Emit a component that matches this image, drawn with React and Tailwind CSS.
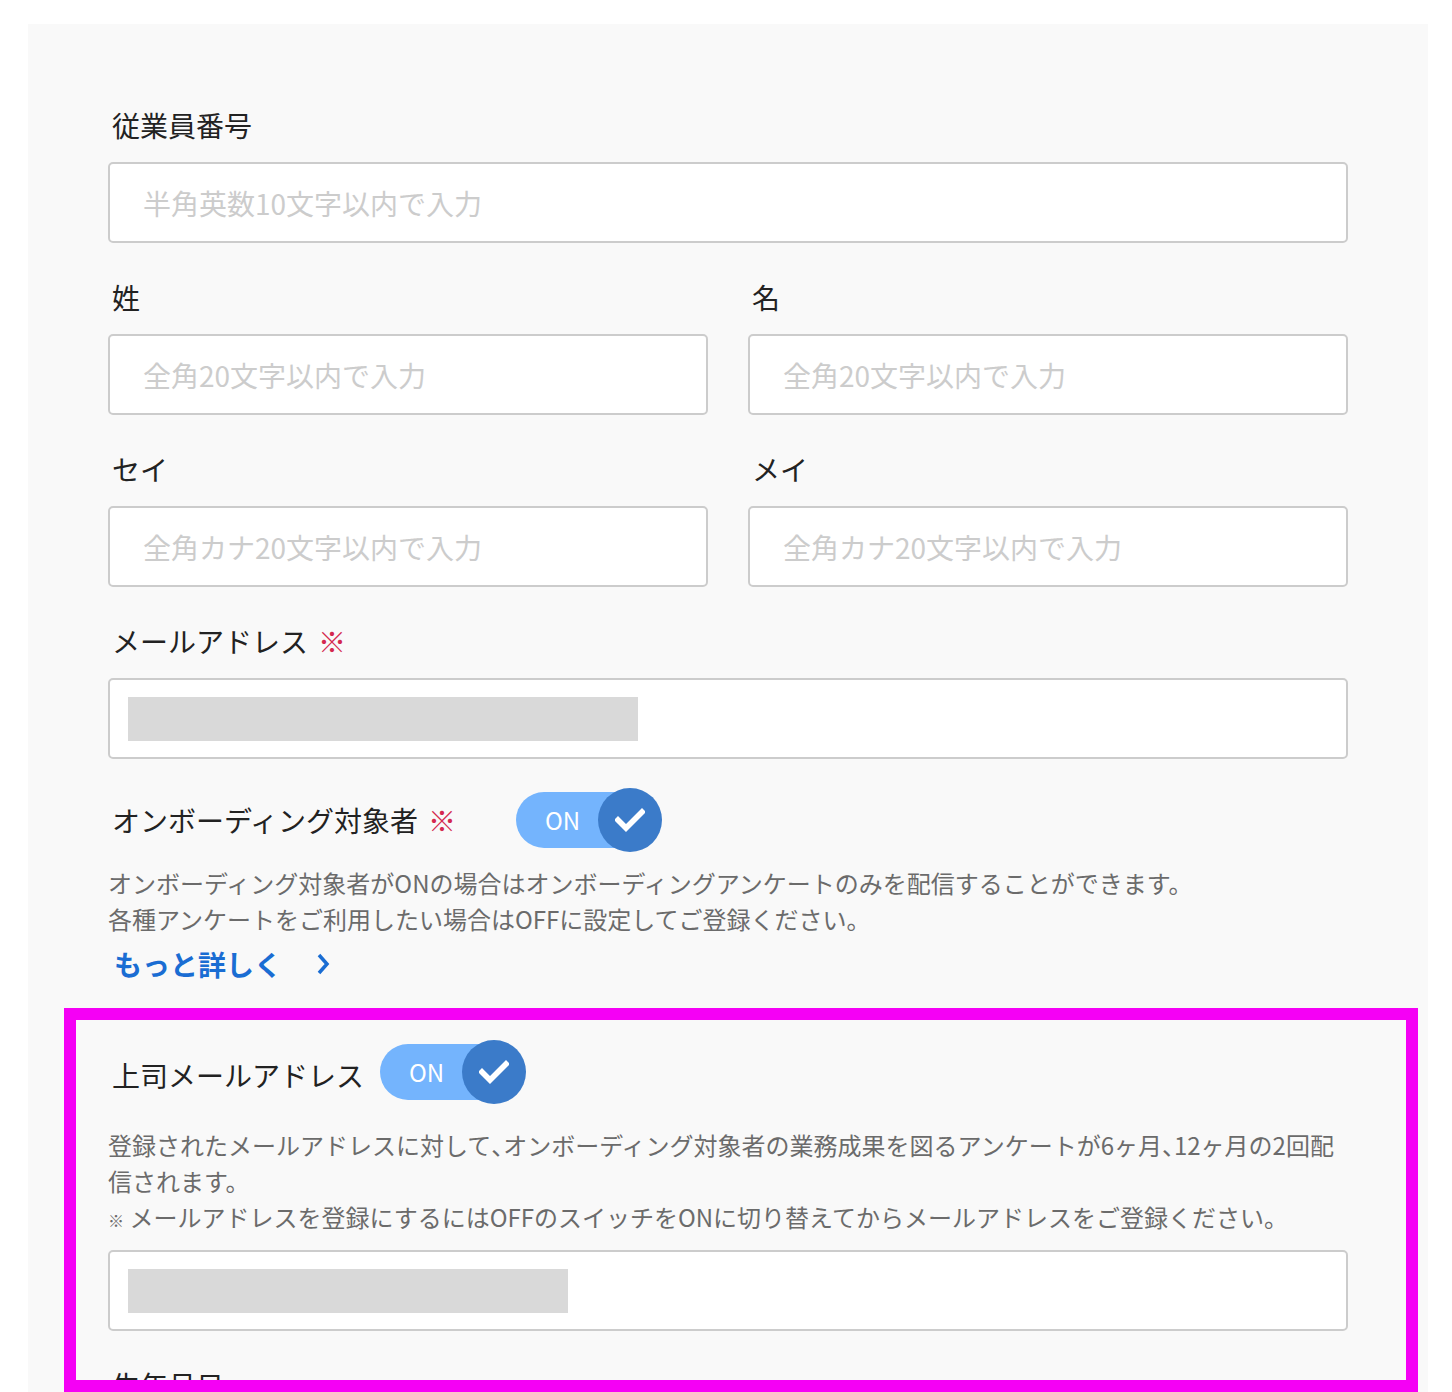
import React from "react";

const font = { fontFamily: '"Noto Sans CJK JP", "Noto Sans", sans-serif' };

function Label({ children, required }) {
  return (
    <div className="text-[28px] leading-[40px] text-[#222] mb-[17px] pl-[4px] whitespace-nowrap">
      {children}
      {required && <span className="text-[#d4294f] ml-[10px]">※</span>}
    </div>
  );
}

function Input({ placeholder, bar }) {
  return (
    <div className="h-[81px] bg-white border-2 border-[#cccccc] rounded-[5px] flex items-center pl-[18px]">
      {placeholder ? (
        <span className="text-[28px] text-[#cccccc] pl-[15px] whitespace-nowrap">{placeholder}</span>
      ) : (
        <div className="h-[44px] bg-[#d9d9d9]" style={{ width: bar }} />
      )}
    </div>
  );
}

function Toggle({ className = "" }) {
  return (
    <div className={"relative w-[146px] h-[64px] shrink-0 " + className}>
      <div className="absolute left-0 top-[4px] w-[130px] h-[56px] rounded-full bg-[#74b4fd] flex items-center pl-[29px]">
        <span className="text-[24px] text-white leading-none">ON</span>
      </div>
      <div className="absolute right-0 top-0 w-[64px] h-[64px] rounded-full bg-[#3b7bc9] flex items-center justify-center">
        <svg width="30" height="24" viewBox="0 0 30 24">
          <polyline points="3,12 11,20 27,4" fill="none" stroke="white" strokeWidth="5.5" strokeLinecap="square" />
        </svg>
      </div>
    </div>
  );
}

const Comma = () => <span className="[font-feature-settings:'halt']">、</span>;

export default function App() {
  return (
    <div className="h-[1392px] overflow-hidden bg-white pt-[24px] pl-[28px]" style={font}>
      <div className="w-[1400px] min-h-[1500px] bg-[#f9f9f9] px-[80px] pt-[81px]">
        <div className="mb-[34px]">
          <Label>従業員番号</Label>
          <Input placeholder="半角英数10文字以内で入力" />
        </div>
        <div className="grid grid-cols-2 gap-x-[40px]">
          <div className="mb-[34px]">
            <Label>姓</Label>
            <Input placeholder="全角20文字以内で入力" />
          </div>
          <div className="mb-[34px]">
            <Label>名</Label>
            <Input placeholder="全角20文字以内で入力" />
          </div>
          <div className="mb-[34px]">
            <Label>セイ</Label>
            <Input placeholder="全角カナ20文字以内で入力" />
          </div>
          <div className="mb-[34px]">
            <Label>メイ</Label>
            <Input placeholder="全角カナ20文字以内で入力" />
          </div>
        </div>
        <div>
          <Label required>メールアドレス</Label>
          <Input bar={510} />
        </div>

        <div className="flex items-center mt-[29px] h-[64px]">
          <div className="text-[28px] leading-[40px] text-[#222] pl-[4px] whitespace-nowrap">
            オンボーディング対象者<span className="text-[#d4294f] ml-[10px]">※</span>
          </div>
          <Toggle className="ml-[60px]" />
        </div>
        <div className="mt-[13px] text-[24px] leading-[36px] text-[#6b6b6b] whitespace-nowrap">
          <div>オンボーディング対象者がONの場合はオンボーディングアンケートのみを配信することができます。</div>
          <div>各種アンケートをご利用したい場合はOFFに設定してご登録ください。</div>
        </div>
        <div className="mt-[7px] flex items-center h-[40px] pl-[6px] text-[28px] font-bold text-[#1a6dd3]">
          <span className="leading-[40px]">もっと詳しく</span>
          <svg className="ml-[34px]" width="14" height="24" viewBox="0 0 14 24">
            <polyline points="3,3 11,12 3,21" fill="none" stroke="#1a6dd3" strokeWidth="3.5" />
          </svg>
        </div>

        <div className="relative mt-[56px]">
          <div className="absolute z-10 top-[-32px] left-[-44px] right-[-70px] h-[384px] border-[12px] border-[#f500f5] pointer-events-none" />
          <div className="flex items-center h-[64px]">
            <div className="text-[28px] leading-[40px] text-[#222] pl-[4px] pt-[6px] whitespace-nowrap">上司メールアドレス</div>
            <Toggle className="ml-[16px]" />
          </div>
          <div className="mt-[23px] text-[24px] leading-[36px] text-[#6b6b6b]">
            <div className="whitespace-nowrap h-[36px]">
              登録されたメールアドレスに対して<Comma />オンボーディング対象者の業務成果を図るアンケートが6ヶ月<Comma />12ヶ月の2回配
            </div>
            <div className="h-[36px]">信されます。</div>
            <div className="whitespace-nowrap h-[36px] overflow-visible">
              <span className="text-[16px] leading-none">※</span> メールアドレスを登録にするにはOFFのスイッチをONに切り替えてからメールアドレスをご登録ください。
            </div>
          </div>
          <div className="mt-[15px] mb-[34px]">
            <Input bar={440} />
          </div>
          <div>
            <Label>生年月日</Label>
            <Input placeholder="" bar={0} />
          </div>
        </div>
      </div>
    </div>
  );
}
